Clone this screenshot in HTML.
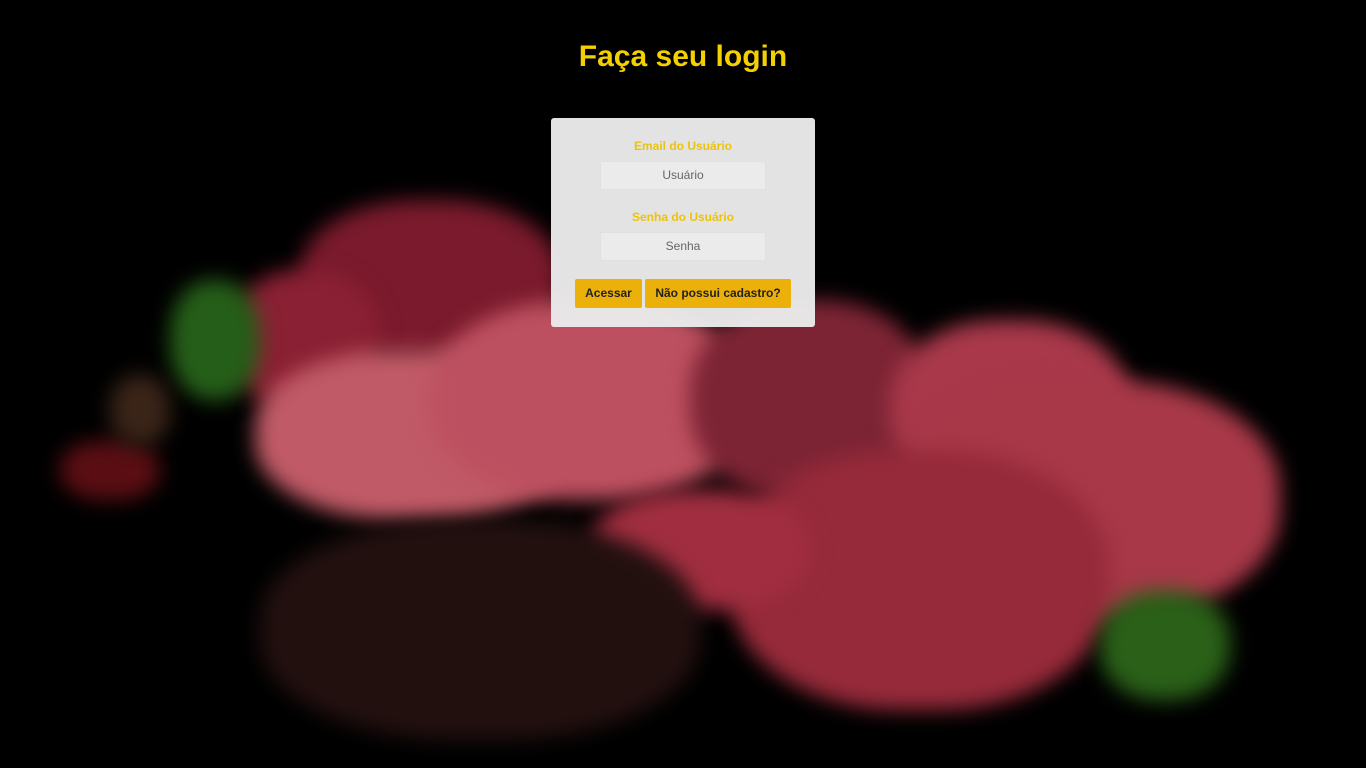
<!DOCTYPE html>
<html><head><meta charset="utf-8"><style>
html,body{margin:0;padding:0;width:1366px;height:768px;overflow:hidden;background:#000;font-family:"Liberation Sans",Arial,sans-serif}
.bg{position:absolute;inset:0;overflow:hidden}
.b{position:absolute;border-radius:45%;filter:blur(10px)}
h1{position:absolute;top:40px;left:0;width:1366px;text-align:center;margin:0;color:#f5d000;font-size:30px;font-weight:bold}
.box{position:absolute;left:551px;top:118px;width:264px;height:209px;background:rgba(234,234,234,0.97);border-radius:3px}
.lab{position:absolute;left:0;width:264px;text-align:center;color:#ecc30a;font-size:12px;font-weight:bold}
.inp{position:absolute;left:49px;width:164px;height:27px;border:1px solid #e0e0e0;border-radius:2px;text-align:center;line-height:27px;color:#666;font-size:12px;background:#ebebeb}
.btn{position:absolute;top:161px;height:29px;background:#ecb00a;border-radius:2px;color:#222;font-size:12px;font-weight:bold;text-align:center;line-height:29px}
</style></head><body>
<div class="bg">
<div class="b" style="left:300px;top:200px;width:260px;height:160px;background:#7a1a2c"></div>
<div class="b" style="left:230px;top:270px;width:150px;height:140px;background:#8a2033"></div>
<div class="b" style="left:255px;top:350px;width:320px;height:170px;background:#c05a66"></div>
<div class="b" style="left:430px;top:300px;width:320px;height:200px;background:#bd5060"></div>
<div class="b" style="left:690px;top:300px;width:240px;height:200px;background:#7c2434"></div>
<div class="b" style="left:890px;top:320px;width:240px;height:180px;background:#a8384a"></div>
<div class="b" style="left:900px;top:380px;width:380px;height:240px;background:#a83848"></div>
<div class="b" style="left:730px;top:450px;width:380px;height:260px;background:#962a3a"></div>
<div class="b" style="left:590px;top:490px;width:220px;height:120px;background:#a02e40"></div>
<div class="b" style="left:1100px;top:590px;width:130px;height:110px;background:#2a6018"></div>
<div class="b" style="left:170px;top:280px;width:90px;height:120px;background:#255e18"></div>
<div class="b" style="left:60px;top:440px;width:100px;height:60px;background:#5a0e13"></div>
<div class="b" style="left:110px;top:375px;width:60px;height:70px;background:#3a2418"></div>
<div class="b" style="left:260px;top:520px;width:440px;height:220px;background:#22100f"></div>
</div>
<h1>Faça seu login</h1>
<div class="box">
<div class="lab" style="top:21px">Email do Usuário</div>
<div class="inp" style="top:43px">Usuário</div>
<div class="lab" style="top:92px">Senha do Usuário</div>
<div class="inp" style="top:114px">Senha</div>
<div class="btn" style="left:24px;width:67px">Acessar</div>
<div class="btn" style="left:94px;width:146px">Não possui cadastro?</div>
</div>
</body></html>
